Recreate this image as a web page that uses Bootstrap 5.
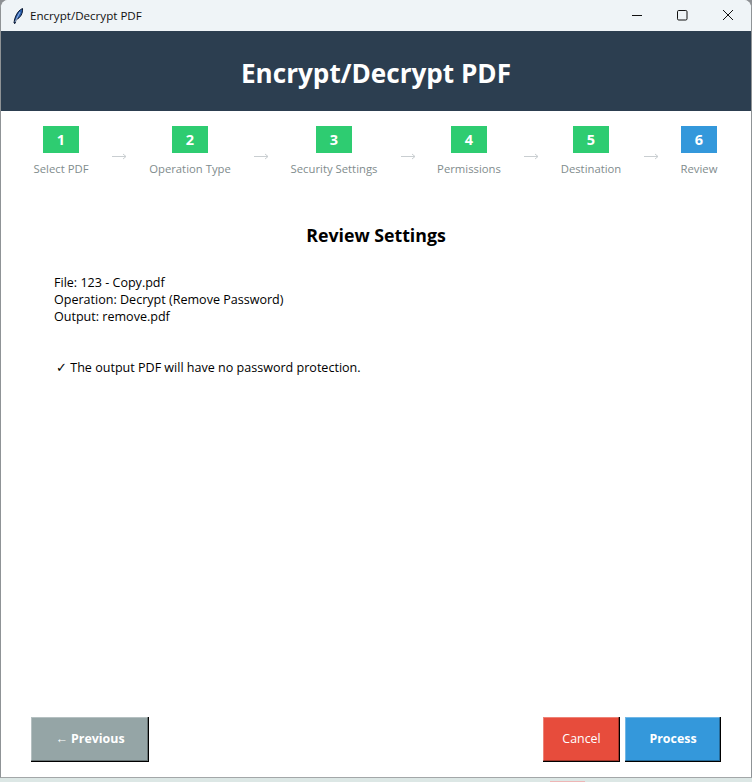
<!DOCTYPE html>
<html lang="en">
<head>
<meta charset="utf-8">
<title>Encrypt/Decrypt PDF</title>
<link href="https://cdn.jsdelivr.net/npm/bootstrap@5.3.0/dist/css/bootstrap.min.css" rel="stylesheet">
<style>
html, body { height: 100%; margin: 0; }
body { background: #8d9094; font-family: "Open Sans", "Noto Sans", sans-serif; overflow: hidden; }
.app-window { height: 778px; background: #fff; border-left: 1px solid #8f9396; border-right: 1px solid #8f9396; border-bottom: 1px solid #a3a7a8; border-radius: 8px 8px 0 0; overflow: hidden; }
.desk-strip { height: 4px; background: #dce7e5; }
.desk-mark { width: 35px; height: 1px; margin-left: 550px; background: #eeb6b6; }
.title-strip { height: 31px; background: #eff4f7; font-size: 11.6px; color: #111; padding-left: 11px; }
.title-ico { width: 12px; height: 18px; margin-right: 6px; }
.win-ctl { width: 46px; height: 31px; padding-bottom: 1px; }
.app-head { height: 80px; background: #2c3e50; color: #fff; font-size: 26.1px; font-weight: 700; padding-top: 5px; }
.stepper { height: 84px; padding-top: 15px; padding-left: 32px; }
.step-item { font-size: 11.3px; color: #7f8c8d; white-space: nowrap; }
.step-num { width: 36px; height: 27px; background: #2ecc71; color: #fff; font-size: 14.5px; font-weight: 700; }
.step-num.is-now { background: #3498db; }
.step-lbl { margin-top: 7px; line-height: 18px; }
.step-arrow { width: 15px; height: 7px; margin: 27px 22px 0 23px; color: #c9ced1; }
.w-a { width: 56px; } .w-b { width: 82px; } .w-c { width: 86px; margin-right: 1px; } .w-d { width: 62px; margin-right: 1px; } .w-e { width: 60px; } .w-f { width: 36px; }
.review-h { font-size: 17.75px; font-weight: 700; color: #000; margin-top: 28px; line-height: 24px; }
.review-body { font-size: 12.55px; line-height: 17px; color: #000; margin: 27px 0 0 53px; }
.review-note { font-size: 12.55px; line-height: 17px; color: #000; margin: 34px 0 0 55px; }
.main-fill { flex: 1 1 auto; min-height: 0; }
.foot-bar { padding: 0 30px 15px 30px; }
.tk-btn { height: 45px; border: 0; border-radius: 0; color: #fff; font-size: 12.4px; box-shadow: inset -1px -1px 0 #000, inset -2px -2px 0 rgba(0,0,0,.3), inset 1px 1px 0 rgba(255,255,255,.3); padding: 0 0 1px; }
.tk-prev { width: 118px; background: #95a5a6; font-weight: 700; }
.tk-cancel { width: 77px; background: #e74c3c; }
.tk-go { width: 96px; background: #3498db; font-weight: 700; margin-left: 5px; }
</style>
</head>
<body>
<div class="app-window d-flex flex-column">
  <div class="title-strip d-flex align-items-center flex-shrink-0">
    <svg class="title-ico" viewBox="0 0 12 18"><path d="M2 16 C2.5 11 5 4 10.5 1.5 C11 6 8.5 11 4.2 12.5 L3 16.5 Z" fill="#2a5fae" stroke="#06122a" stroke-width="1"/><path d="M3 15 L8 5" stroke="#cfe3ff" stroke-width=".7"/></svg>
    <span class="flex-grow-1">Encrypt/Decrypt PDF</span>
    <div class="win-ctl d-flex align-items-center justify-content-center"><svg width="12" height="12" viewBox="0 0 12 12"><path d="M2 6.5H12" stroke="#111" stroke-width="1"/></svg></div>
    <div class="win-ctl d-flex align-items-center justify-content-center"><svg width="12" height="12" viewBox="0 0 12 12"><rect x="1.5" y="1.5" width="9.5" height="9.5" rx="1.2" fill="none" stroke="#111" stroke-width="1"/></svg></div>
    <div class="win-ctl d-flex align-items-center justify-content-center"><svg width="12" height="12" viewBox="0 0 12 12"><path d="M1 1L11 11M11 1L1 11" stroke="#111" stroke-width="1"/></svg></div>
  </div>
  <div class="app-head d-flex align-items-center justify-content-center flex-shrink-0">Encrypt/Decrypt PDF</div>
  <div class="stepper d-flex flex-shrink-0">
    <div class="step-item w-a d-flex flex-column align-items-center"><div class="step-num d-flex align-items-center justify-content-center">1</div><div class="step-lbl">Select PDF</div></div>
    <svg class="step-arrow" viewBox="0 0 15 7"><path d="M0 3.5H14M11 1L14 3.5L11 6" fill="none" stroke="currentColor"/></svg>
    <div class="step-item w-b d-flex flex-column align-items-center"><div class="step-num d-flex align-items-center justify-content-center">2</div><div class="step-lbl">Operation Type</div></div>
    <svg class="step-arrow" viewBox="0 0 15 7"><path d="M0 3.5H14M11 1L14 3.5L11 6" fill="none" stroke="currentColor"/></svg>
    <div class="step-item w-c d-flex flex-column align-items-center"><div class="step-num d-flex align-items-center justify-content-center">3</div><div class="step-lbl">Security Settings</div></div>
    <svg class="step-arrow" viewBox="0 0 15 7"><path d="M0 3.5H14M11 1L14 3.5L11 6" fill="none" stroke="currentColor"/></svg>
    <div class="step-item w-d d-flex flex-column align-items-center"><div class="step-num d-flex align-items-center justify-content-center">4</div><div class="step-lbl">Permissions</div></div>
    <svg class="step-arrow" viewBox="0 0 15 7"><path d="M0 3.5H14M11 1L14 3.5L11 6" fill="none" stroke="currentColor"/></svg>
    <div class="step-item w-e d-flex flex-column align-items-center"><div class="step-num d-flex align-items-center justify-content-center">5</div><div class="step-lbl">Destination</div></div>
    <svg class="step-arrow" viewBox="0 0 15 7"><path d="M0 3.5H14M11 1L14 3.5L11 6" fill="none" stroke="currentColor"/></svg>
    <div class="step-item w-f d-flex flex-column align-items-center"><div class="step-num is-now d-flex align-items-center justify-content-center">6</div><div class="step-lbl">Review</div></div>
  </div>
  <div class="main-fill">
    <div class="review-h text-center">Review Settings</div>
    <div class="review-body">File: 123 - Copy.pdf<br>Operation: Decrypt (Remove Password)<br>Output: remove.pdf</div>
    <div class="review-note">✓ The output PDF will have no password protection.</div>
  </div>
  <div class="foot-bar d-flex flex-shrink-0">
    <button class="btn tk-btn tk-prev me-auto">← Previous</button>
    <button class="btn tk-btn tk-cancel">Cancel</button>
    <button class="btn tk-btn tk-go">Process</button>
  </div>
</div>
<div class="desk-strip d-flex align-items-end"><div class="desk-mark"></div></div>
<script src="https://cdn.jsdelivr.net/npm/bootstrap@5.3.0/dist/js/bootstrap.bundle.min.js"></script>
</body>
</html>
